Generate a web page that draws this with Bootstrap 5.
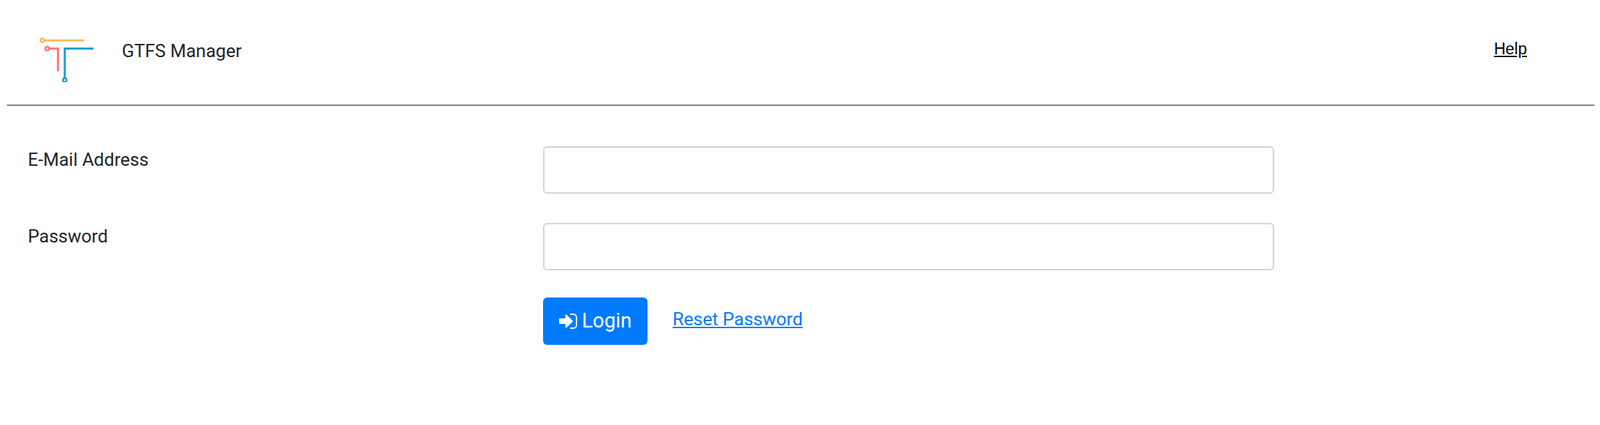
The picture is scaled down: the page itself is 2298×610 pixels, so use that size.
<!DOCTYPE html>
<html lang="en">
<head>
<meta charset="utf-8">
<title>GTFS Manager</title>
<link rel="stylesheet" href="https://cdn.jsdelivr.net/npm/bootstrap@5.3.0/dist/css/bootstrap.min.css">
<style>
body { font-family: Roboto, "Liberation Sans", sans-serif; font-size: 26px; color: #212529; background: #fff; }
.top-head { height: 150px; margin: 0 8px 0 10px; padding-left: 46px; }
.head-rule { height: 2px; margin: 0 8px 0 10px; background: #808080; }
.brand-logo { width: 90px; height: 90px; margin-top: -5px; flex: none; }
.brand-name { font-size: 26px; margin-left: 29px; margin-top: -4px; }
.help-link { font-family: "Liberation Sans", Arial, sans-serif; font-size: 23px; color: #000; margin-right: 97px; margin-top: -9px; }
.help-link:hover { color: #000; }
.form-area { padding: 58px 98px 0 40px; }
.form-grid { --bs-gutter-x: 60px; margin-bottom: 42px; }
.form-grid-wide { margin-bottom: 39px; }
.field-label { font-size: 26px; line-height: 36px; margin-top: 0; margin-bottom: 0; }
.field-input { height: 68px; border: 2px solid #ced4da; border-radius: 6px; font-size: 26px; }
.go-btn { background: #007bff; border: 0; color: #fff; font-size: 29px; line-height: 1.5; width: 150px; height: 68px; border-radius: 6px; padding: 0; }
.go-btn:hover, .go-btn:active { background: #007bff; color: #fff; }
.go-icon { width: 26px; height: 22px; vertical-align: -2px; margin-right: 7px; }
.reset-link { color: #007bff; font-size: 26px; margin-left: 36px; position: relative; top: -3px; }
.reset-link:hover { color: #007bff; }
</style>
</head>
<body class="m-0">
<header class="top-head d-flex align-items-center justify-content-between">
  <div class="d-flex align-items-center">
    <svg class="brand-logo" viewBox="56 28 90 90" xmlns="http://www.w3.org/2000/svg" fill="none" stroke-width="3" aria-label="GTFS Manager logo">
      <path d="M63 58H121" stroke="#ffb950"/>
      <circle cx="60.7" cy="58" r="2.700" stroke="#ffb950" stroke-width="2.400" fill="#fff"/>
      <path d="M71 69.7H83.3V102.3" stroke="#ff7378"/>
      <circle cx="67.7" cy="69.7" r="2.700" stroke="#ff7378" stroke-width="2.400" fill="#fff"/>
      <path d="M134.3 69.7H93V112" stroke="#1b9ad8"/>
      <circle cx="93" cy="115" r="2.700" stroke="#1b9ad8" stroke-width="2.400" fill="#fff"/>
    </svg>
    <span class="brand-name">GTFS Manager</span>
  </div>
  <a class="help-link" href="#">Help</a>
</header>
<div class="head-rule"></div>
<main class="form-area">
  <form>
    <div class="row form-grid">
      <div class="col-4"><label class="field-label" for="em">E-Mail Address</label></div>
      <div class="col-6"><input id="em" class="form-control field-input" type="email"></div>
    </div>
    <div class="row form-grid form-grid-wide">
      <div class="col-4"><label class="field-label" for="pw">Password</label></div>
      <div class="col-6"><input id="pw" class="form-control field-input" type="password"></div>
    </div>
    <div class="row form-grid">
      <div class="col-6 offset-4 d-flex align-items-center">
        <button type="button" class="btn go-btn">
          <svg class="go-icon" viewBox="0 0 26 22" xmlns="http://www.w3.org/2000/svg" aria-hidden="true">
            <path fill="#fff" d="M0 8.200C0 7.500.5 7 1.200 7H9V2.800C9 1.700 10.300 1.200 11 1.900L19.500 10.200C20 10.700 20 11.300 19.500 11.800L11 20.100C10.300 20.800 9 20.300 9 19.200V15H1.200C.5 15 0 14.500 0 13.800Z"/>
            <path fill="none" stroke="#fff" stroke-width="1.800" d="M16 1H20.500C23 1 25 3 25 5.500V16.500C25 19 23 21 20.500 21H16"/>
          </svg>Login
        </button>
        <a class="reset-link" href="#">Reset Password</a>
      </div>
    </div>
  </form>
</main>
<script src="https://cdn.jsdelivr.net/npm/bootstrap@5.3.0/dist/js/bootstrap.bundle.min.js"></script>
</body>
</html>
